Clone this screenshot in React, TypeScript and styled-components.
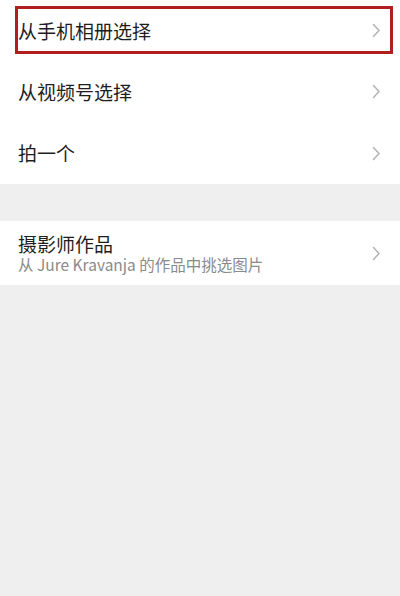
import styled, { createGlobalStyle } from 'styled-components';

const GlobalStyle = createGlobalStyle`
	html, body {
		margin: 0;
		padding: 0;
		background: #efefef;
		font-family: 'Noto Sans CJK SC', 'Noto Sans', sans-serif;
	}
`;

const Chevron = () => (
	<svg width="9" height="15" viewBox="0 0 9 15" fill="none">
		<path d="M1.5 1.5L7 7.5L1.5 13.5" stroke="#b3b3b3" strokeWidth="1.5" strokeLinecap="round" strokeLinejoin="round" />
	</svg>
);

const App = () => {
	const items = ['从手机相册选择', '从视频号选择', '拍一个'];

	return (
		<>
			<GlobalStyle />
			<Page>
				<Section>
					{items.map((label, i) => (
						<Row key={label} $height={i === 2 ? 62 : 61}>
							<Title>{label}</Title>
							<Chevron />
						</Row>
					))}
					<Highlight />
				</Section>
				<Gap />
				<Section>
					<Row $height={64}>
						<TextBlock>
							<Title>摄影师作品</Title>
							<Sub>从 Jure Kravanja 的作品中挑选图片</Sub>
						</TextBlock>
						<Chevron />
					</Row>
				</Section>
			</Page>
		</>
	);
};

const Page = styled.div`
	width: 400px;
	min-height: 596px;
	background: #efefef;
`;

const Section = styled.div`
	position: relative;
	background: #ffffff;
`;

const Row = styled.div<{ $height: number }>`
	display: flex;
	align-items: center;
	justify-content: space-between;
	height: ${(props) => props.$height}px;
	padding: 0 19px 0 18px;
	box-sizing: border-box;
`;

const TextBlock = styled.div`
	display: flex;
	flex-direction: column;
`;

const Title = styled.div`
	font-size: 19px;
	line-height: 22px;
	color: #1e1e1e;
`;

const Sub = styled.div`
	font-size: 15.5px;
	line-height: 19px;
	color: #8a8a8a;
`;

const Gap = styled.div`
	height: 37px;
`;

const Highlight = styled.div`
	position: absolute;
	left: 15px;
	top: 6px;
	width: 378px;
	height: 48px;
	box-sizing: border-box;
	border: 3px solid #b01e1e;
	pointer-events: none;
`;

export default App;
